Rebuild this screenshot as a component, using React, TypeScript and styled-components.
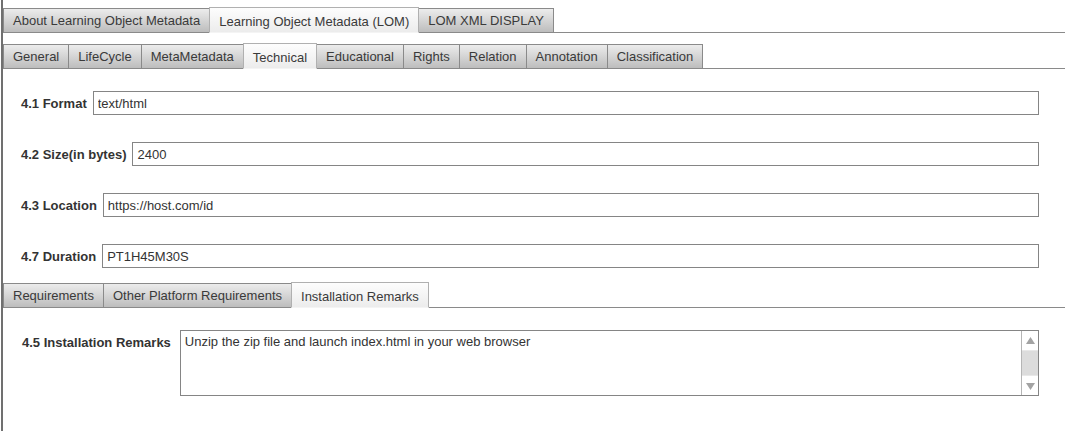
import React from "react";
import styled, { createGlobalStyle, css } from "styled-components";

const GlobalStyle = createGlobalStyle`
  html, body { margin: 0; padding: 0; background: #fff; }
  body { font-family: "Liberation Sans", Arial, sans-serif; color: #333; }
  * { box-sizing: border-box; }
`;

const Page = styled.div`
  min-height: 100vh;
  margin-left: 1px;
  border-left: 2px solid #707070;
  display: flex;
  flex-direction: column;
`;

const TabBar = styled.div<{ $top: number; $height: number }>`
  display: flex;
  align-items: flex-end;
  margin-top: ${(p) => p.$top}px;
  border-bottom: 1px solid #8a8a8a;
  height: ${(p) => p.$height}px;
`;

const Tab = styled.div<{ $active?: boolean }>`
  height: 25px;
  padding: 0 9px;
  margin-bottom: -1px;
  margin-right: -1px;
  display: flex;
  align-items: center;
  font-size: 13px;
  color: #3a3a3a;
  white-space: nowrap;
  border: 1px solid #8a8a8a;
  background: linear-gradient(#ececec, #bdbdbd);
  ${(p) =>
    p.$active &&
    css`
      height: 26px;
      position: relative;
      z-index: 1;
      border-color: #b0b0b0;
      border-bottom-color: #f4f4f4;
      background: linear-gradient(#fdfdfd, #ececec);
      padding-top: 2px;
    `}
`;

const Fields = styled.div`
  display: flex;
  flex-direction: column;
  gap: 27px;
  padding: 22px 26px 7px 18px;
`;

const Row = styled.label`
  display: flex;
  align-items: center;
  gap: 6px;
`;

const Label = styled.span`
  font-size: 13px;
  font-weight: bold;
  color: #333;
  white-space: nowrap;
`;

const Input = styled.input`
  flex: 1;
  height: 24px;
  border: 1px solid #858585;
  padding: 0 4px;
  font-family: "Liberation Sans", Arial, sans-serif;
  font-size: 13px;
  color: #333;
  outline: none;
`;

const RemarkRow = styled.label`
  display: flex;
  align-items: flex-start;
  gap: 9px;
  padding: 22px 26px 0 19px;
`;

const RemarkLabel = styled(Label)`
  margin-top: 5px;
`;

const TextBox = styled.div`
  flex: 1;
  height: 66px;
  display: flex;
  border: 1px solid #858585;
`;

const TextArea = styled.textarea`
  flex: 1;
  border: none;
  resize: none;
  outline: none;
  padding: 3px 4px;
  font-family: "Liberation Sans", Arial, sans-serif;
  font-size: 13px;
  color: #333;
  overflow: hidden;
`;

const Scrollbar = styled.div`
  width: 17px;
  display: flex;
  flex-direction: column;
  border-left: 1px solid #b5b5b5;
`;

const Arrow = styled.div`
  height: 19px;
  display: flex;
  align-items: center;
  justify-content: center;
  background: #fff;
`;

const Thumb = styled.div`
  flex: 1;
  background: #dcdcdc;
  border-top: 1px solid #e8e8e8;
  border-bottom: 1px solid #e8e8e8;
`;

const Tri = ({ down }: { down?: boolean }) => (
  <svg width="9" height="8" viewBox="0 0 9 8">
    <polygon points={down ? "0,1 9,1 4.5,8" : "0,7 9,7 4.5,0"} fill="#a3a3a3" />
  </svg>
);

const fields = [
  { label: "4.1 Format", value: "text/html" },
  { label: "4.2 Size(in bytes)", value: "2400" },
  { label: "4.3 Location", value: "https://host.com/id" },
  { label: "4.7 Duration", value: "PT1H45M30S" },
];

export default function App() {
  return (
    <>
      <GlobalStyle />
      <Page>
        <TabBar $top={0} $height={33}>
          <Tab>About Learning Object Metadata</Tab>
          <Tab $active>Learning Object Metadata (LOM)</Tab>
          <Tab>LOM XML DISPLAY</Tab>
        </TabBar>
        <TabBar $top={11} $height={25}>
          {["General", "LifeCycle", "MetaMetadata"].map((t) => (
            <Tab key={t}>{t}</Tab>
          ))}
          <Tab $active>Technical</Tab>
          {["Educational", "Rights", "Relation", "Annotation", "Classification"].map((t) => (
            <Tab key={t}>{t}</Tab>
          ))}
        </TabBar>
        <Fields>
          {fields.map((f) => (
            <Row key={f.label}>
              <Label>{f.label}</Label>
              <Input defaultValue={f.value} />
            </Row>
          ))}
        </Fields>
        <TabBar $top={0} $height={33}>
          <Tab>Requirements</Tab>
          <Tab>Other Platform Requirements</Tab>
          <Tab $active>Installation Remarks</Tab>
        </TabBar>
        <RemarkRow>
          <RemarkLabel>4.5 Installation Remarks</RemarkLabel>
          <TextBox>
            <TextArea defaultValue="Unzip the zip file and launch index.html in your web browser" />
            <Scrollbar>
              <Arrow>
                <Tri />
              </Arrow>
              <Thumb />
              <Arrow>
                <Tri down />
              </Arrow>
            </Scrollbar>
          </TextBox>
        </RemarkRow>
      </Page>
    </>
  );
}
